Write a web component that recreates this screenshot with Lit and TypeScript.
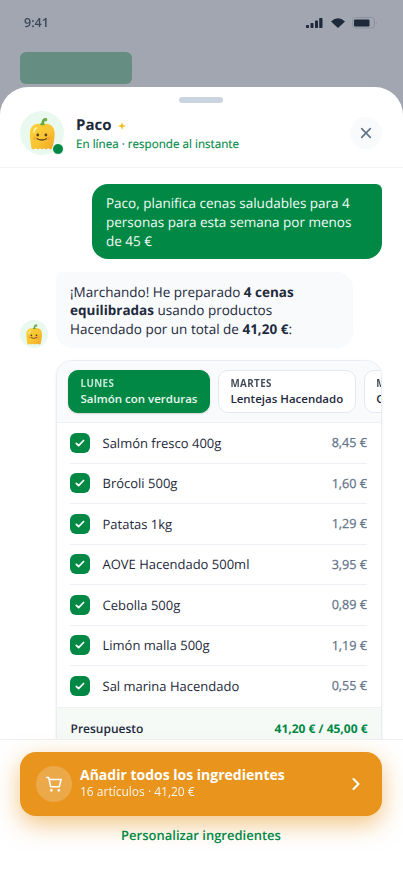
import { LitElement, html, css } from "lit";
import { customElement, property, state } from "lit/decorators.js";
import { classMap } from "lit/directives/class-map.js";

@customElement("paco-avatar")
class PacoAvatar extends LitElement {
  static styles = css`
    :host { display: block; background: #e9f9f0; border-radius: 50%; }
    svg { display: block; width: 100%; height: 100%; }
  `;
  render() {
    return html`<svg viewBox="0 0 44 44">
      <defs>
        <linearGradient id="body" x1="0" y1="0" x2="1" y2="1">
          <stop offset="0" stop-color="#fdd33c" />
          <stop offset="0.55" stop-color="#f9c432" />
          <stop offset="1" stop-color="#f0a425" />
        </linearGradient>
      </defs>
      <path d="M22.500 13.500C22.800 11 22.600 8.600 25.400 8.200" fill="none" stroke="#63a83c" stroke-width="2.600" stroke-linecap="round" />
      <circle cx="25.600" cy="8.800" r="1.700" fill="#6fb045" />
      <path d="M22 13.200C26 12 34.600 12.200 34.600 22.500C34.600 29 33.400 32.200 32.600 37Q31.300 39.300 29.600 38L28.200 37.200L26 38.500L24 37.200L22 38.500L20 37.200L18 38.500L15.800 37.200L14.300 38Q12.600 39.300 11.400 37C10.900 32 9.900 29 9.900 22.500C9.900 12.500 18 12.100 22 13.200Z" fill="url(#body)" />
      <path d="M20 12.900q2.400-1.600 5 0l-.8 1.300h-3.400z" fill="#63a83c" />
      <path d="M14 21.300Q14 17.900 16.600 17" fill="none" stroke="#fff2a8" stroke-width="1.600" stroke-linecap="round" />
      <circle cx="15" cy="27.300" r="1.900" fill="#f4a12c" opacity=".65" />
      <circle cx="28.900" cy="27.300" r="1.900" fill="#f4a12c" opacity=".8" />
      <circle cx="17.800" cy="24" r="1.400" fill="#59401c" />
      <circle cx="25.900" cy="24" r="1.400" fill="#59401c" />
      <path d="M17.300 27.700Q21.800 30.300 26.400 27.700" fill="none" stroke="#59401c" stroke-width="1.300" stroke-linecap="round" />
    </svg>`;
  }
}

interface Item { name: string; price: string; }

@customElement("ingredient-row")
class IngredientRow extends LitElement {
  @property({ attribute: false }) item: Item = { name: "", price: "" };
  static styles = css`
    :host { display: flex; align-items: center; height: 40.500px; margin: 0 14px 0 13px; border-bottom: 1px solid #eef0f6; }
    :host(:last-of-type) { border-bottom-color: transparent; }
    .box { width: 20px; height: 20px; border-radius: 6px; background: #008844; display: grid; place-items: center; margin-right: 12.500px; }
    .name { flex: 1; font-size: 13px; color: #1e293b; }
    .price { font-size: 12.600px; font-weight: 500; color: #64748b; -webkit-text-stroke: .25px #64748b; }
  `;
  render() {
    return html`<span class="box"><svg width="12" height="12" viewBox="0 0 12 12"><path d="M2.300 6.300 4.600 8.600 9.600 3.500" fill="none" stroke="#fff" stroke-width="1.700" stroke-linecap="round" stroke-linejoin="round" /></svg></span>
      <span class="name">${this.item.name}</span><span class="price">${this.item.price}</span>`;
  }
}

@customElement("app-root")
class AppRoot extends LitElement {
  @state() private selected = 0;

  private days = [
    { day: "LUNES", meal: "Salmón con verduras" },
    { day: "MARTES", meal: "Lentejas Hacendado" },
    { day: "MIÉRCOLES", meal: "Crema de calabaza" },
  ];
  private items: Item[] = [
    { name: "Salmón fresco 400g", price: "8,45 €" },
    { name: "Brócoli 500g", price: "1,60 €" },
    { name: "Patatas 1kg", price: "1,29 €" },
    { name: "AOVE Hacendado 500ml", price: "3,95 €" },
    { name: "Cebolla 500g", price: "0,89 €" },
    { name: "Limón malla 500g", price: "1,19 €" },
    { name: "Sal marina Hacendado", price: "0,55 €" },
  ];

  static styles = css`
    :host { display: flex; flex-direction: column; height: 875px; width: 403px; overflow: hidden; background: #a1a6b0; color: #1e293b; font-family: "Open Sans", "Noto Sans", sans-serif; text-rendering: geometricPrecision; }
    * { box-sizing: border-box; }
    .behind { flex: none; height: 87px; padding: 15px 25px 0 24px; filter: blur(0.7px); }
    .status { display: flex; align-items: center; justify-content: space-between; height: 15px; font-size: 12.500px; font-weight: 600; color: #3b475b; }
    .status svg { display: block; }
    .block { width: 112px; height: 32px; margin: 22px 0 0 -4px; border-radius: 6px; background: #668d82; }
    .sheet { flex: 1; min-height: 0; width: 402.500px; display: flex; flex-direction: column; background: #fff; border-radius: 28px 28px 0 0; overflow: hidden; }
    .handle { flex: none; width: 44px; height: 6px; border-radius: 3px; background: #cbd5e1; margin: 10px auto 0; }
    header { flex: none; display: flex; align-items: center; height: 65px; padding: 0 20.600px 4px 20px; border-bottom: 1px solid #f1f3f6; }
    .face { position: relative; width: 44px; height: 44px; }
    .face paco-avatar { width: 44px; height: 44px; }
    .dot { position: absolute; right: 0; bottom: 0; width: 12px; height: 12px; border-radius: 50%; border: 1.500px solid #fff; background: #008844; }
    .who { flex: 1; margin: 3px 0 0 12px; }
    .name { display: flex; align-items: center; font-size: 15px; line-height: 19px; font-weight: 700; gap: 7px; }
    .presence { font-size: 11.650px; line-height: 16px; margin-top: 2px; color: #008844; -webkit-text-stroke: .15px #008844; }
    .close { width: 32px; height: 32px; border: 0; padding: 0; border-radius: 50%; background: #f8fafc; display: grid; place-items: center; }
    .chat { flex: 1; min-height: 0; overflow: hidden; padding: 15.700px 20.500px 0 20px; display: flex; flex-direction: column; gap: 12.500px; }
    .bubble { flex: none; font-size: 13.500px; line-height: 18.560px; padding: 10.800px 14px 9.200px; }
    .user { align-self: flex-end; width: 290px; background: #008844; color: #f2fbf6; border-radius: 16px 6px 16px 16px; }
    .reply { flex: none; display: flex; align-items: flex-end; gap: 8px; }
    .reply paco-avatar { width: 28px; height: 28px; flex: none; }
    .bot { width: 297px; background: #f8fafc; border-radius: 6px 16px 16px 16px; }
    .card { flex: none; margin-left: 36px; border: 1px solid #e9eef5; border-radius: 16px; overflow: hidden; background: #fff; box-shadow: 0 1px 3px rgba(15,23,42,.08); }
    .tabs { display: flex; gap: 8px; padding: 9px 11px; height: 62px; overflow: hidden; background: #f8fafc; border-bottom: 1px solid #edf1f6; }
    .tab { flex: none; text-align: left; font: inherit; padding: 6px 11.500px; height: 43px; border-radius: 10px; border: 1px solid #e2e8f0; background: #fff; color: #1e293b; }
    .tab.on { background: #008844; border-color: #008844; color: #e9f7ef; box-shadow: 0 1px 2px rgba(0,0,0,.16); }
    .day { display: block; font-size: 9.800px; line-height: 13px; font-weight: 700; letter-spacing: .4px; opacity: .85; }
    .meal { display: block; font-size: 11.500px; line-height: 16px; font-weight: 600; margin-top: .5px; }
    .budget { display: flex; justify-content: space-between; align-items: center; height: 60px; padding: 0 13.500px 16.500px; background: #f5faf7; border-top: 1px solid #edf1f4; font-size: 12px; font-weight: 600; }
    .budget b { color: #008844; font-weight: 700; }
    footer { flex: none; height: 136px; border-top: 1px solid #edf0f4; padding: 11.500px 20.500px 0 20px; background: #fff; text-align: center; }
    .cta { width: 100%; height: 64px; border: 0; border-radius: 16px; background: #e8941d; color: #fff; font: inherit; text-align: left; display: flex; align-items: center; padding: 0 16px; box-shadow: 0 8px 24px rgba(232,148,29,.55); }
    .cart { width: 36px; height: 36px; border-radius: 50%; background: rgba(255,255,255,.2); display: grid; place-items: center; margin-right: 8px; }
    .words { flex: 1; }
    .title { display: block; font-size: 14px; line-height: 16.500px; font-weight: 700; }
    .sub { display: block; font-size: 12px; line-height: 15px; opacity: .9; padding-bottom: 1px; }
    .link { display: block; margin-top: 9px; font-size: 13px; line-height: 20px; font-weight: 600; color: #008844; position: relative; }
  `;

  render() {
    return html`
      <div class="behind">
        <div class="status"><span>9:41</span>
          <svg width="74" height="14" viewBox="0 0 74 14" fill="#1e293b">
            <rect x="2" y="9" width="3" height="3" rx=".7" /><rect x="6.500" y="7" width="3" height="5" rx=".7" /><rect x="11" y="4.500" width="3" height="7.500" rx=".7" /><rect x="15.200" y="2" width="3.300" height="10" rx=".7" />
            <path d="M27 5.400Q34 -1 41 5.400L34 12Z" />
            <rect x="48.500" y="1.500" width="22" height="10.500" rx="3" fill="none" stroke="#8b929e" stroke-width="1" />
            <rect x="50" y="3.500" width="15.500" height="7" rx="1.200" /><path d="M72 5.500q1.600 1.200 0 3z" fill="#8b929e" />
          </svg>
        </div>
        <div class="block"></div>
      </div>
      <section class="sheet">
        <div class="handle"></div>
        <header>
          <div class="face"><paco-avatar></paco-avatar><span class="dot"></span></div>
          <div class="who">
            <div class="name">Paco <svg width="8" height="8" viewBox="0 0 8 8"><path d="M4 0 5 3 8 4 5 5 4 8 3 5 0 4 3 3Z" fill="#fbbc16" /></svg></div>
            <div class="presence">En línea · responde al instante</div>
          </div>
          <button class="close" aria-label="Cerrar"><svg width="12" height="12" viewBox="0 0 12 12"><path d="M1.700 1.700 10.300 10.300M10.300 1.700 1.700 10.300" stroke="#64748b" stroke-width="1.700" stroke-linecap="round" /></svg></button>
        </header>
        <main class="chat">
          <div class="bubble user">Paco, planifica cenas saludables para 4 personas para esta semana por menos de 45 €</div>
          <div class="reply"><paco-avatar></paco-avatar>
            <div class="bubble bot">¡Marchando! He preparado <b>4 cenas equilibradas</b> usando productos Hacendado por un total de <b>41,20 €</b>:</div>
          </div>
          <div class="card">
            <div class="tabs">${this.days.map((d, i) => html`<button class=${classMap({ tab: true, on: i === this.selected })} @click=${() => (this.selected = i)}><span class="day">${d.day}</span><span class="meal">${d.meal}</span></button>`)}</div>
            ${this.items.map((item) => html`<ingredient-row .item=${item}></ingredient-row>`)}
            <div class="budget"><span>Presupuesto</span><b>41,20 € / 45,00 €</b></div>
          </div>
        </main>
        <footer>
          <button class="cta">
            <span class="cart"><svg width="18" height="18" viewBox="0 0 18 18" fill="none" stroke="#fff" stroke-width="1.500" stroke-linecap="round" stroke-linejoin="round"><path d="M1.500 2.500H3.700L5.600 11.700H14.300L16.200 4.500H4.200" /><circle cx="6.400" cy="15.300" r=".6" fill="#fff" /><circle cx="13.800" cy="15.300" r=".6" fill="#fff" /></svg></span>
            <span class="words"><span class="title">Añadir todos los ingredientes</span><span class="sub">16 artículos · 41,20 €</span></span>
            <svg width="20" height="20" viewBox="0 0 20 20"><path d="M7.500 5 12.500 10 7.500 15" fill="none" stroke="#fff" stroke-width="2.100" stroke-linecap="round" stroke-linejoin="round" /></svg>
          </button>
          <span class="link">Personalizar ingredientes</span>
        </footer>
      </section>`;
  }
}
